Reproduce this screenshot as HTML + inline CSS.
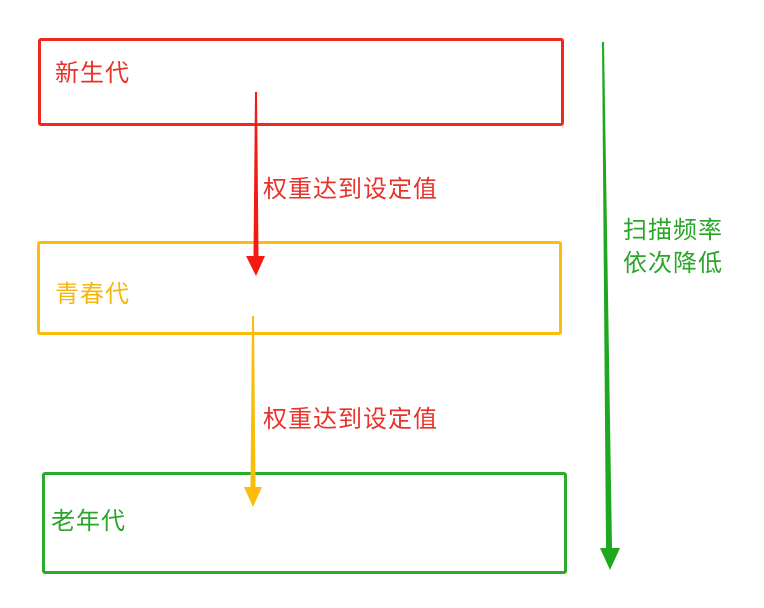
<!DOCTYPE html>
<html><head><meta charset="utf-8"><style>
body{margin:0;width:764px;height:608px;background:#fff;position:relative;overflow:hidden;font-family:"Liberation Sans","Noto Sans CJK SC",sans-serif}
.b{position:absolute;box-sizing:border-box;border:3px solid;border-radius:3px}
.t{position:absolute;font-size:24px;line-height:28px;letter-spacing:1px;white-space:nowrap}
</style></head><body>
<div class="b" style="left:38px;top:38px;width:526px;height:88px;border-color:#f0281e"></div>
<div class="b" style="left:37px;top:241px;width:525px;height:94px;border-color:#fbbc0a"></div>
<div class="b" style="left:42px;top:472px;width:525px;height:102px;border-color:#2aac2a"></div>
<div class="t" style="left:55px;top:60px;color:#e8322a">新生代</div>
<div class="t" style="left:55px;top:281px;color:#f6b610">青春代</div>
<div class="t" style="left:51px;top:508px;color:#2aa52a">老年代</div>
<div class="t" style="left:263px;top:176px;color:#e8322a">权重达到设定值</div>
<div class="t" style="left:263px;top:406px;color:#e8322a">权重达到设定值</div>
<div class="t" style="left:623px;top:217px;color:#2aa52a">扫描频率</div>
<div class="t" style="left:623px;top:250px;color:#2aa52a">依次降低</div>
<svg width="764" height="608" style="position:absolute;left:0;top:0">
<polygon points="255,92 257,92 258.5,256 265,256 256,276 246,256 253.5,256" fill="#f41a14"/>
<polygon points="252,316 254,316 255.5,487 262,487 253,507 244,487 250.5,487" fill="#fbbc0a"/>
<polygon points="602,42 604,42 612,548 620,548 610,570 600,548 606,548" fill="#1fa81f"/>
</svg>
</body></html>
